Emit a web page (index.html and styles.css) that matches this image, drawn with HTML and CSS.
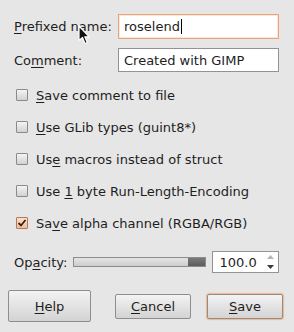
FILE: index.html
```html
<!DOCTYPE html>
<html lang="en">
<head>
  <meta charset="UTF-8" />
  <title>Export Image as C-Source</title>
  <link rel="stylesheet" href="styles.css">
</head>
<body>
  <div class="dialog">
    <div class="field-row">
      <label class="field-label"><u>P</u>refixed name:</label>
      <div class="entry focused">roselend<span class="caret"></span></div>
    </div>
    <div class="field-row second">
      <label class="field-label">Co<u>m</u>ment:</label>
      <div class="entry">Created with GIMP</div>
    </div>

    <div class="checks">
      <label class="check-row"><span class="box"></span><span><u>S</u>ave comment to file</span></label>
      <label class="check-row"><span class="box"></span><span><u>U</u>se GLib types (guint8*)</span></label>
      <label class="check-row"><span class="box"></span><span>Us<u>e</u> macros instead of struct</span></label>
      <label class="check-row"><span class="box"></span><span>Use <u>1</u> byte Run-Length-Encoding</span></label>
      <label class="check-row"><span class="box checked">
        <svg width="10" height="10" viewBox="0 0 10 10"><path d="M1.5 5 L4 7.5 L8.5 2" fill="none" stroke="#3b2414" stroke-width="1.8"/></svg>
      </span><span>Sa<u>v</u>e alpha channel (RGBA/RGB)</span></label>
    </div>

    <div class="opacity-row">
      <span class="field-label short">Op<u>a</u>city:</span>
      <div class="scale"><div class="thumb"></div></div>
      <div class="spin">
        <span class="spin-value">100.0</span>
        <span class="spin-arrows">
          <svg width="7" height="4" viewBox="0 0 7 4"><path d="M0 4 L3.5 0 L7 4 Z" fill="#b4b4b4"/></svg>
          <svg width="7" height="4" viewBox="0 0 7 4"><path d="M0 0 L7 0 L3.5 4 Z" fill="#3c3c3c"/></svg>
        </span>
      </div>
    </div>

    <div class="buttons">
      <button class="btn help"><u>H</u>elp</button>
      <div class="btn-group">
        <button class="btn"><u>C</u>ancel</button>
        <button class="btn default"><u>S</u>ave</button>
      </div>
    </div>

    <svg class="pointer" width="14" height="20" viewBox="0 0 14 20">
      <path d="M1 1 L1 15.5 L4.5 12.5 L7 18.5 L9.3 17.5 L6.8 11.8 L11.2 11.8 Z" fill="#111" stroke="#fff" stroke-width="1.2" stroke-linejoin="round"/>
    </svg>
  </div>
</body>
</html>
```

FILE: styles.css
```css
:root {
  --bg: #e6e6e6;
  --text: #1e1e1e;
  --border: #939393;
  --focus: #e8a57c;
}

body {
  margin: 0;
  background: var(--bg);
  color: var(--text);
  font-family: 'DejaVu Sans', sans-serif;
  font-size: 13px;
}

u {
  text-underline-offset: 2px;
}

.dialog {
  position: relative;
  width: 294px;
  height: 332px;
  padding-top: 14px;
  box-sizing: border-box;
}

/* ----- entries ----- */
.field-row {
  display: flex;
  align-items: center;
  height: 25px;
  padding: 0 15px 0 14px;
}

.field-row.second {
  margin-top: 9px;
  height: 24px;
}

.field-label {
  width: 104px;
  flex: none;
}

.field-label.short {
  width: auto;
  margin-right: 6px;
}

.entry {
  flex: 1;
  height: 100%;
  box-sizing: border-box;
  border: 1px solid var(--border);
  background: #fff;
  padding: 0 5px;
  display: flex;
  align-items: center;
}

.entry.focused {
  border-color: var(--focus);
  box-shadow: inset 0 0 0 1px #fbe6d8;
}

.caret {
  display: inline-block;
  width: 1px;
  height: 15px;
  background: #000;
  margin-left: 1px;
}

/* ----- check buttons ----- */
.checks {
  margin-top: 7px;
}

.check-row {
  display: flex;
  align-items: center;
  height: 32px;
  padding-left: 16px;
  gap: 8px;
}

.box {
  width: 12px;
  height: 12px;
  box-sizing: border-box;
  border: 1px solid #8a8a8a;
  border-radius: 1px;
  background: linear-gradient(#f4f4f4, #d2d2d2);
  display: flex;
  align-items: center;
  justify-content: center;
}

.box.checked {
  border-color: #b07a58;
  background: linear-gradient(#fbe0cc, #f0bf9c);
}

/* ----- opacity ----- */
.opacity-row {
  display: flex;
  align-items: center;
  height: 22px;
  margin-top: 12px;
  padding: 0 15px 0 14px;
}

.scale {
  width: 133px;
  height: 10px;
  box-sizing: border-box;
  border: 1px solid #8c8c8c;
  background: linear-gradient(#e4e4e4, #cdcdcd);
  display: flex;
  justify-content: flex-end;
}

.thumb {
  width: 17px;
  background: linear-gradient(#7a7a7a, #5c5c5c);
}

.spin {
  margin-left: 6px;
  flex: 1;
  height: 22px;
  box-sizing: border-box;
  border: 1px solid var(--border);
  background: #fff;
  display: flex;
  align-items: center;
  padding-left: 6px;
}

.spin-value {
  flex: 1;
}

.spin-arrows {
  width: 16px;
  display: flex;
  flex-direction: column;
  align-items: center;
  gap: 6px;
}

.spin-arrows svg {
  display: block;
}

/* ----- buttons ----- */
.buttons {
  display: flex;
  align-items: center;
  justify-content: space-between;
  margin-top: 17px;
  padding: 0 11px 0 8px;
  height: 32px;
}

.btn-group {
  display: flex;
  gap: 16px;
}

.btn {
  font-family: inherit;
  font-size: 13px;
  color: var(--text);
  width: 76px;
  height: 25px;
  padding: 0;
  border: 1px solid #8e8e8e;
  border-radius: 2px;
  background: linear-gradient(#f3f3f3, #d3d3d3);
}

.btn.help {
  width: 83px;
  height: 32px;
}

.btn.default {
  box-shadow: 0 0 1px 1px #f3b48a;
}

.pointer {
  position: absolute;
  left: 78px;
  top: 25px;
}
```
